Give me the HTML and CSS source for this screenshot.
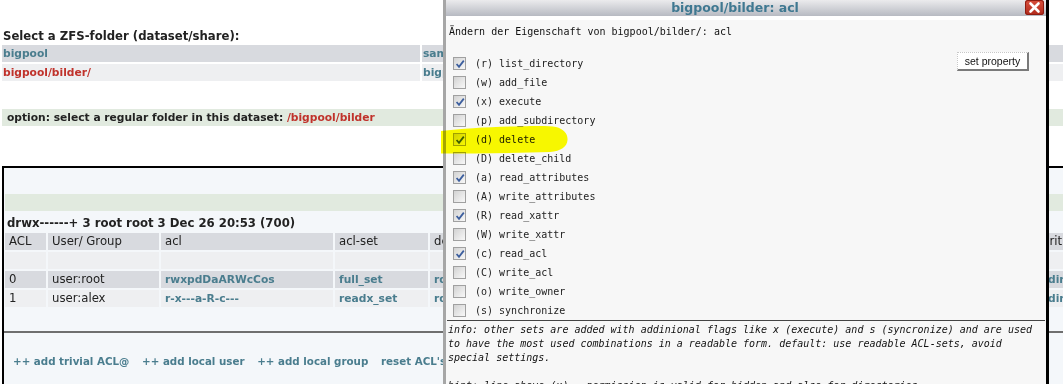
FILE: index.html
```html
<!DOCTYPE html>
<html lang="de">
  <head>
    <meta charset="utf-8" />
    <meta name="viewport" content="width=device-width, initial-scale=1" />
    <title>ACL | bigpool/bilder</title>
    <link rel="stylesheet" href="styles.css">
  </head>
  <body>
    <div class="page">
        <h3 class="heading">Select a ZFS-folder (dataset/share):</h3>
        <table class="folders">
            <colgroup><col class="f-name"><col class="f-share"></colgroup>
            <tr class="dark"><td><a class="link">bigpool</a></td><td><a class="link">sambashare</a></td></tr>
            <tr class="light"><td><a class="link current">bigpool/bilder/</a></td><td><a class="link">bigpool/bilder</a></td></tr>
        </table>

        <div class="option">option: select a regular folder in this dataset: <span class="red">/bigpool/bilder</span></div>

        <div class="aclbox">
            <div class="band"></div>
            <div class="perms">drwx------+ 3 root root 3 Dec 26 20:53 (700)</div>
            <table class="acls">
                <colgroup>
                    <col class="c-acl"><col class="c-user"><col class="c-str"><col class="c-set">
                    <col class="c-wide"><col class="c-wide"><col class="c-wide"><col class="c-last">
                </colgroup>
                <tr class="dark head">
                    <td>ACL</td><td>User/ Group</td><td>acl</td><td>acl-set</td>
                    <td>details</td><td>inheritance</td><td>type</td><td>writable</td>
                </tr>
                <tr class="light"><td></td><td></td><td></td><td></td><td></td><td></td><td></td><td></td></tr>
                <tr class="dark">
                    <td>0</td><td>user:root</td><td><a class="link">rwxpdDaARWcCos</a></td><td><a class="link">full_set</a></td>
                    <td><a class="link">rd-only</a></td><td><a class="link">file,dir</a></td><td><a class="link">allow</a></td><td class="shift"><a class="link">dir</a></td>
                </tr>
                <tr class="light">
                    <td>1</td><td>user:alex</td><td><a class="link">r-x---a-R-c---</a></td><td><a class="link">readx_set</a></td>
                    <td><a class="link">rd-only</a></td><td><a class="link">file,dir</a></td><td><a class="link">allow</a></td><td class="shift"><a class="link">dir</a></td>
                </tr>
            </table>
            <div class="actions">
                <a class="link">++ add trivial ACL@</a>
                <a class="link">++ add local user</a>
                <a class="link">++ add local group</a>
                <a class="link">reset ACL's</a>
            </div>
        </div>
    </div>

    <!-- property dialog, lies over the page -->
    <div class="dialog">
        <div class="dlg-title">
            bigpool/bilder: acl
            <span class="close"><svg width="19" height="15" viewBox="0 0 19 15"><path d="M5.5 3.5 L13.5 11.5 M13.5 3.5 L5.5 11.5" stroke="#fff" stroke-width="2.6" stroke-linecap="round"/></svg></span>
        </div>
        <div class="dlg-body">
            <p class="intro">Ändern der Eigenschaft von bigpool/bilder/: acl</p>
            <div class="perm-area">
                <ul class="flags">
                    <li><span class="cb on"><svg width="12" height="12" viewBox="0 0 12 12"><path d="M2.6 6 L5 8.8 L9.8 2.6" /></svg></span>(r) list_directory</li>
                    <li><span class="cb"></span>(w) add_file</li>
                    <li><span class="cb on"><svg width="12" height="12" viewBox="0 0 12 12"><path d="M2.6 6 L5 8.8 L9.8 2.6" /></svg></span>(x) execute</li>
                    <li><span class="cb"></span>(p) add_subdirectory</li>
                    <li><span class="cb on"><svg width="12" height="12" viewBox="0 0 12 12"><path d="M2.6 6 L5 8.8 L9.8 2.6" /></svg></span>(d) delete</li>
                    <li><span class="cb"></span>(D) delete_child</li>
                    <li><span class="cb on"><svg width="12" height="12" viewBox="0 0 12 12"><path d="M2.6 6 L5 8.8 L9.8 2.6" /></svg></span>(a) read_attributes</li>
                    <li><span class="cb"></span>(A) write_attributes</li>
                    <li><span class="cb on"><svg width="12" height="12" viewBox="0 0 12 12"><path d="M2.6 6 L5 8.8 L9.8 2.6" /></svg></span>(R) read_xattr</li>
                    <li><span class="cb"></span>(W) write_xattr</li>
                    <li><span class="cb on"><svg width="12" height="12" viewBox="0 0 12 12"><path d="M2.6 6 L5 8.8 L9.8 2.6" /></svg></span>(c) read_acl</li>
                    <li><span class="cb"></span>(C) write_acl</li>
                    <li><span class="cb"></span>(o) write_owner</li>
                    <li><span class="cb"></span>(s) synchronize</li>
                </ul>
                <button type="button" class="setbtn">set property</button>
            </div>
            <div class="info">
                <p>info: other sets are added with addinional flags like x (execute) and s (syncronize) and are used to have the most used combinations in a readable form. default: use readable ACL-sets, avoid special settings.</p>
                <p>hint: line above (x) = permission is valid for hidden and also for directories</p>
            </div>
        </div>
    </div>

    <!-- yellow marker stroke drawn over "(d) delete" -->
    <svg class="marker" width="130" height="32" viewBox="0 0 130 32">
        <path d="M1 7 C20 5 45 3 70 2.5 C95 2 108 1.5 116 3 C124 5 128 10 127.5 16 C127 23 121 27 110 28 C80 29 40 29.5 1 29.5 Z" fill="#ffff00"/>
    </svg>
  </body>
</html>
```

FILE: styles.css
```css
body {
    margin: 0;
    overflow: hidden;
    background: #fff;
    font-family: "DejaVu Sans", Verdana, sans-serif;
    font-size: 11.7px;
    color: #222;
}

.page {
    width: 1120px;
}

.heading {
    margin: 29px 0 0;
    padding-left: 3px;
    font-size: 11.7px;
    line-height: 14px;
}

.link {
    color: #4a7d8e;
    font-weight: bold;
    font-size: 10.7px;
    text-decoration: none;
}

.link.current,
.red {
    color: #c0322b;
}

table {
    border-spacing: 2px;
    table-layout: fixed;
}

td {
    padding: 1px 4px;
    line-height: 15px;
    height: 15px;
    white-space: nowrap;
    overflow: hidden;
}

.dark td {
    background: #d8dadf;
}

.light td {
    background: #eeeff1;
}

.folders {
    width: 1110px;
}

.folders td {
    padding: 1px 1px;
}

.f-name {
    width: 418px;
}

.option {
    margin: 26px 0 0 2px;
    padding: 1px 5px;
    line-height: 15px;
    background: #e1eadf;
    font-weight: bold;
    font-size: 10.7px;
}

/* the lower acl area */
.aclbox {
    margin: 40px 0 0 2px;
    height: 260px;
    border-top: 2px solid #000;
    border-left: 2px solid #000;
    background: #f4f7fa;
    padding-top: 26px;
}

.band {
    height: 17px;
    margin-left: 1px;
    background: #e1eadf;
}

.perms {
    margin-top: 5px;
    padding-left: 3px;
    line-height: 14px;
    font-weight: bold;
}

.acls {
    margin: 1px 0 0 -1px;
    width: 1140px;
}

.c-acl { width: 41px; }
.c-user { width: 111px; }
.c-str { width: 172px; }
.c-set { width: 93px; }
.c-wide { width: 200px; }

.acls td.shift {
    padding-left: 12px;
}

.actions {
    margin-top: 22px;
    border-top: 2px solid #6f6f6f;
    padding: 21px 0 0 9px;
    line-height: 14px;
}

.actions .link {
    margin-right: 9px;
    font-size: 10.3px;
}

/* dialog */
.dialog {
    position: absolute;
    top: 0;
    left: 443px;
    width: 600px;
    height: 400px;
    border-left: 3px solid #a6a6a6;
    border-right: 3px solid #000;
    background: #f7f7f7;
}

.dlg-title {
    position: relative;
    height: 16px;
    line-height: 15px;
    padding-right: 22px;
    text-align: center;
    border-bottom: 4px solid #fff;
    background: linear-gradient(#ebebed, #b7bac2);
    color: #3f7891;
    font-weight: bold;
    font-size: 12.5px;
}

.close {
    position: absolute;
    top: 0;
    right: 2px;
    width: 19px;
    height: 15px;
    border-radius: 3px;
    background: linear-gradient(#d9503d, #b02a1c);
    box-shadow: inset 0 0 0 1px #8e1d12;
}

.close svg {
    display: block;
}

.dlg-body {
    padding-top: 5px;
    font-family: "DejaVu Sans Mono", monospace;
    font-size: 10px;
    color: #111;
}

.intro {
    margin: 0;
    padding-left: 3px;
    line-height: 14px;
}

.perm-area {
    display: flex;
    justify-content: space-between;
    align-items: flex-start;
    margin-top: 15px;
}

.flags {
    list-style: none;
    margin: 0;
    padding: 0;
}

.flags li {
    display: flex;
    align-items: center;
    height: 19px;
    color: #222;
}

.cb {
    width: 13px;
    height: 13px;
    margin: 0 9px 0 7px;
    box-sizing: border-box;
    border: 1px solid #a0a0a0;
    background: linear-gradient(135deg, #d2d2d2, #f8f8f8);
}

.cb svg {
    display: block;
    margin: -0.5px;
}

.cb path {
    fill: none;
    stroke: #3c5e9e;
    stroke-width: 1.8;
}

.setbtn {
    margin: -2px 17px 0 0;
    width: 72px;
    height: 19px;
    padding: 0;
    background: #fff;
    border: 1px dotted #c8c8c8;
    border-right: 2px solid #7a7a7a;
    border-bottom: 2px solid #7a7a7a;
    font-family: "Liberation Sans", Arial, sans-serif;
    font-size: 10.5px;
    color: #111;
}

.info {
    margin: 0 1px 0 1px;
    border-top: 1px solid #444;
    padding: 2px 0 0 1px;
    font-style: italic;
    line-height: 14px;
}

.info p {
    margin: 0 0 14px;
}

.marker {
    position: absolute;
    left: 440px;
    top: 124px;
    mix-blend-mode: multiply;
}
```
